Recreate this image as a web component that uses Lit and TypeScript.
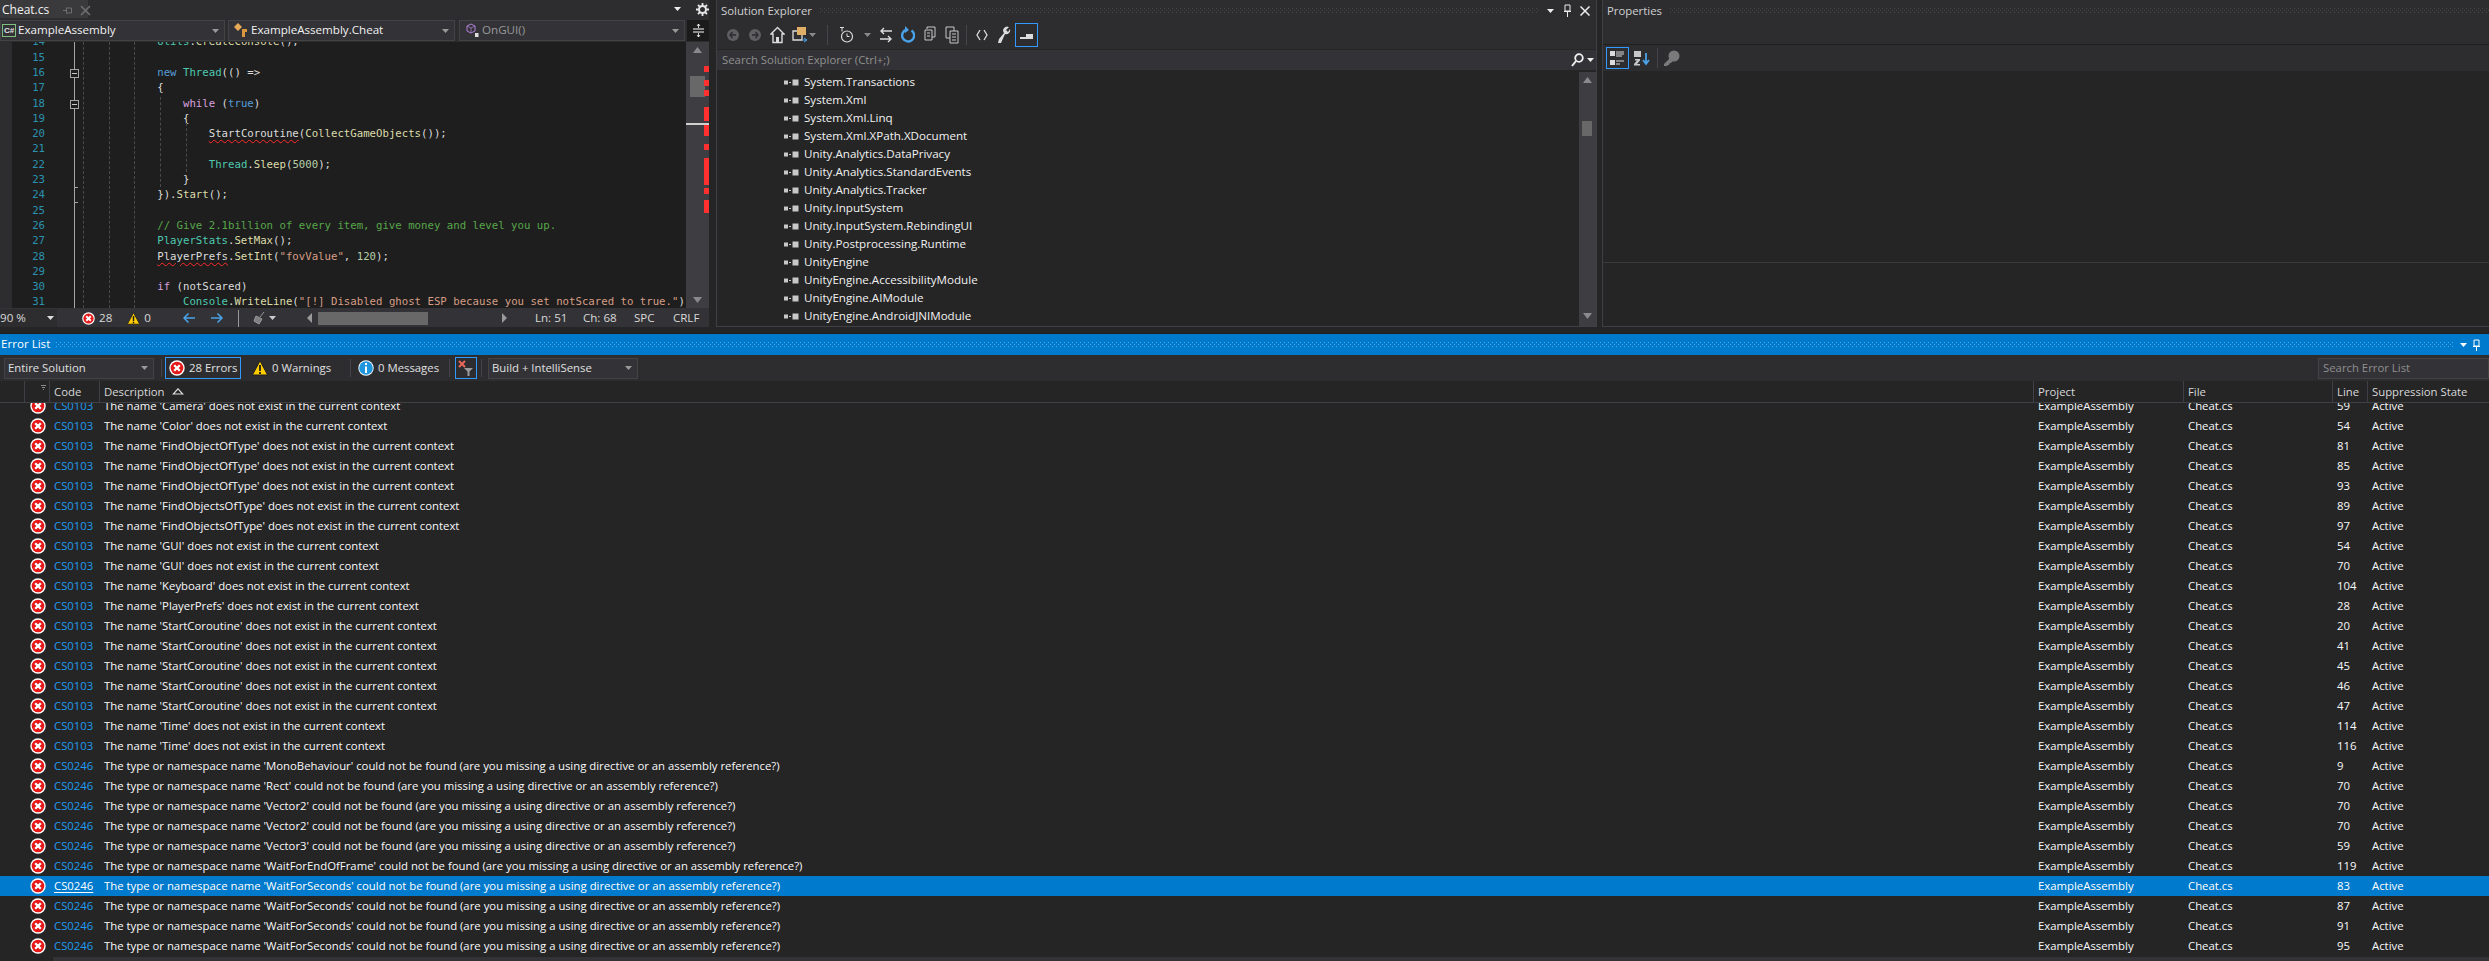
import { LitElement, html, svg, css, nothing } from "lit";
import { customElement } from "lit/decorators.js";

type Seg = [string, string];
const K = "k", T = "t", C = "c", S = "s", G = "g", N = "n", M = "m", P = "p", W = "w", V = "v";

const CODE: [number, Seg[]][] = [
  [14, [["            ", P], ["Utils", T], [".", P], ["CreateConsole", M], ["();", P]]],
  [15, []],
  [16, [["            ", P], ["new", K], [" ", P], ["Thread", T], ["(() =>", P]]],
  [17, [["            {", P]]],
  [18, [["                ", P], ["while", C], [" (", P], ["true", K], [")", P]]],
  [19, [["                {", P]]],
  [20, [["                    ", P], ["StartCoroutine", W], ["(", P], ["CollectGameObjects", M], ["());", P]]],
  [21, []],
  [22, [["                    ", P], ["Thread", T], [".", P], ["Sleep", M], ["(", P], ["5000", N], [");", P]]],
  [23, [["                }", P]]],
  [24, [["            }).", P], ["Start", M], ["();", P]]],
  [25, []],
  [26, [["            ", P], ["// Give 2.1billion of every item, give money and level you up.", G]]],
  [27, [["            ", P], ["PlayerStats", T], [".", P], ["SetMax", M], ["();", P]]],
  [28, [["            ", P], ["PlayerPrefs", W], [".", P], ["SetInt", M], ["(", P], ["\"fovValue\"", S], [", ", P], ["120", N], [");", P]]],
  [29, []],
  [30, [["            ", P], ["if", C], [" (", P], ["notScared", V], [")", P]]],
  [31, [["                ", P], ["Console", T], [".", P], ["WriteLine", M], ["(", P], ["\"[!] Disabled ghost ESP because you set notScared to true.\"", S], [")", P]]],
];

const MARKS: [number, number][] = [[66, 6], [80, 6], [90, 6], [107, 14], [124, 12], [144, 6], [158, 27], [188, 6], [200, 13]];

const REFS = ["System.Transactions", "System.Xml", "System.Xml.Linq", "System.Xml.XPath.XDocument", "Unity.Analytics.DataPrivacy", "Unity.Analytics.StandardEvents", "Unity.Analytics.Tracker", "Unity.InputSystem", "Unity.InputSystem.RebindingUI", "Unity.Postprocessing.Runtime", "UnityEngine", "UnityEngine.AccessibilityModule", "UnityEngine.AIModule", "UnityEngine.AndroidJNIModule"];

const ctx = (n: string) => `The name '${n}' does not exist in the current context`;
const typ = (n: string) => `The type or namespace name '${n}' could not be found (are you missing a using directive or an assembly reference?)`;
const ERR: [string, string, number][] = [
  ["CS0103", ctx("Camera"), 59], ["CS0103", ctx("Color"), 54],
  ["CS0103", ctx("FindObjectOfType"), 81], ["CS0103", ctx("FindObjectOfType"), 85], ["CS0103", ctx("FindObjectOfType"), 93],
  ["CS0103", ctx("FindObjectsOfType"), 89], ["CS0103", ctx("FindObjectsOfType"), 97],
  ["CS0103", ctx("GUI"), 54], ["CS0103", ctx("GUI"), 70], ["CS0103", ctx("Keyboard"), 104], ["CS0103", ctx("PlayerPrefs"), 28],
  ["CS0103", ctx("StartCoroutine"), 20], ["CS0103", ctx("StartCoroutine"), 41], ["CS0103", ctx("StartCoroutine"), 45], ["CS0103", ctx("StartCoroutine"), 46], ["CS0103", ctx("StartCoroutine"), 47],
  ["CS0103", ctx("Time"), 114], ["CS0103", ctx("Time"), 116],
  ["CS0246", typ("MonoBehaviour"), 9], ["CS0246", typ("Rect"), 70], ["CS0246", typ("Vector2"), 70], ["CS0246", typ("Vector2"), 70], ["CS0246", typ("Vector3"), 59],
  ["CS0246", typ("WaitForEndOfFrame"), 119], ["CS0246", typ("WaitForSeconds"), 83], ["CS0246", typ("WaitForSeconds"), 87], ["CS0246", typ("WaitForSeconds"), 91], ["CS0246", typ("WaitForSeconds"), 95],
];

const errIcon = (s = 16) => html`<svg class="ic" width=${s} height=${s} viewBox="0 0 16 16"><circle cx="8" cy="8" r="7.7" fill="#fff"/><circle cx="8" cy="8" r="6.3" fill="#e51919"/><path d="M5.200 5.200l5.600 5.600M10.800 5.200l-5.600 5.600" stroke="#fff" stroke-width="2.300"/></svg>`;
const warnIcon = (s = 16) => html`<svg class="ic" width=${s} height=${s} viewBox="0 0 16 16"><path d="M8 .8L15.600 15H.4z" fill="#ffcc00" stroke="#1e1e1e"/><path d="M8 5v6M8 12v2" stroke="#1e1e1e" stroke-width="1.800"/></svg>`;
const infoIcon = (s = 16) => html`<svg class="ic" width=${s} height=${s} viewBox="0 0 16 16"><circle cx="8" cy="8" r="7.700" fill="#fff"/><circle cx="8" cy="8" r="6.800" fill="#1d96de"/><path d="M8 3v2M8 6.500V13" stroke="#fff" stroke-width="2"/></svg>`;
const drop = (c = "#999") => html`<svg class="ic" width="7" height="4" viewBox="0 0 7 4"><path d="M0 0h7L3.500 4z" fill=${c}/></svg>`;
const refIcon = html`<svg class="ic" width="15" height="7" viewBox="0 0 15 7"><path d="M0 1.500h4v4H0zM5 3h2v1H5zM8.500 .5h6v6h-6z" fill="#c8c8c8"/></svg>`;
const tbIcon = (w: number, body: unknown) => html`<svg class="ic" width=${w} height="18" viewBox="0 0 ${w} 18">${body}</svg>`;

@customElement("app-root")
export class AppRoot extends LitElement {
  static styles = css`
    :host { display: block; width: 2489px; height: 961px; overflow: hidden; background: #2d2d30; color: #f1f1f1; font: 11.35px/1.4 "Open Sans", "Noto Sans", sans-serif; }
    * { box-sizing: border-box; }
    .ic { display: block; flex: none; }
    .top { display: flex; height: 334px; border-bottom: 1px solid #1f1f20; background: #252526; }
    .doc { width: 709px; flex: none; display: flex; flex-direction: column; height: 327px; background: #2d2d30; }
    .tabs { height: 18px; display: flex; align-items: center; background: #2d2d30; flex: none; }
    .tab { width: 88px; height: 18px; background: #3a3a3d; display: flex; align-items: center; padding: 2px 0 0 2px; font-size: 12px; }
    .tab .pin { margin-left: 14px; }
    .tab .x { margin-left: 8px; }
    .grow { flex: 1; }
    .tabs .menu { margin-right: 15px; }
    .nav { height: 24px; display: flex; align-items: center; gap: 3px; flex: none; padding-top: 1px; }
    .combo { height: 21px; display: flex; align-items: center; background: #333337; border: 1px solid #434346; font-size: 11.6px; position: relative; white-space: nowrap; }
    .combo .lbl { flex: 1; }
    .combo .ic:last-child { margin-right: 5px; }
    .c1 { width: 225px; padding-left: 1px; }
    .c2 { width: 227px; padding-left: 5px; }
    .c3 { width: 226px; padding-left: 6px; margin-left: 1px; color: #999; }
    .c-s { display: block; width: 14px; height: 13px; margin-right: 2px; flex: none; border: 1px solid #7fbf7f; color: #e0e0e0; font: bold 8px/11px "Liberation Sans", sans-serif; text-align: center; }
    .split { width: 22px; height: 21px; margin-left: -1px; background: #1b1b1c; display: flex; align-items: center; justify-content: center; }
    .editor { height: 266px; display: flex; flex: none; }
    .lmargin { width: 12px; background: #2d2d30; flex: none; }
    .codewrap { flex: 1; position: relative; overflow: hidden; background: #1e1e1e; }
    .lines { margin-top: -7.6px; }
    .ln { display: flex; height: 15.3px; font: 10.7px/15.3px "DejaVu Sans Mono", monospace; white-space: pre; color: #dcdcdc; }
    .num { width: 33px; text-align: right; color: #2b91af; margin-right: 35px; flex: none; }
    .k { color: #569cd6; } .t { color: #4ec9b0; } .c { color: #d8a0df; } .s { color: #d69d85; } .g { color: #57a64a; }
    .n { color: #b5cea8; } .m { color: #dcdcaa; } .p { color: #dcdcdc; } .v { color: #dcdcdc; }
    .w { color: #dcdcdc; text-decoration: underline wavy #ff2a2a 1px; text-underline-offset: 2px; }
    .guide { position: absolute; width: 0; border-left: 1px dashed #4a4a4a; }
    .fold { position: absolute; left: 62px; width: 1px; top: 0; bottom: 0; background: #a5a5a5; }
    .fbox { position: absolute; left: 62px; width: 9px; height: 9px; margin-left: -4px; background: #1e1e1e; border: 1px solid #a5a5a5; display: flex; align-items: center; justify-content: center; }
    .fbox i { display: block; width: 5px; height: 1px; background: #c8c8c8; }
    .tick { position: absolute; left: 62px; width: 4px; height: 1px; background: #a5a5a5; }
    .vbar { width: 23px; flex: none; background: #3e3e42; position: relative; }
    .varrow { position: absolute; left: 7px; }
    .vthumb { position: absolute; left: 4px; top: 34px; width: 15px; height: 21px; background: #686868; }
    .mark { position: absolute; right: 0; width: 5px; background: #ff3030; }
    .caret { position: absolute; left: 0; right: 0; top: 81px; height: 2px; background: #d0d0d0; }
    .status { height: 19px; flex: none; display: flex; align-items: center; background: #333337; font-size: 11.6px; color: #d8d8d8; white-space: nowrap; padding-top: 1px; }
    .zoomc { width: 57px; height: 18px; background: #2d2d30; display: flex; align-items: center; justify-content: space-between; padding-right: 3px; flex: none; }
    .st { display: flex; align-items: center; flex: none; }
    .sthumb { width: 110px; height: 13px; background: #686868; flex: none; }
    .sol { width: 881px; flex: none; margin-left: 7px; display: flex; flex-direction: column; height: 327px; border-left: 1px solid #3f3f46; border-right: 1px solid #3f3f46; border-bottom: 1px solid #3f3f46; background: #252526; }
    .ph { height: 20px; flex: none; display: flex; align-items: center; padding: 1px 0 0 4px; background: #2d2d30; font-size: 11.35px; color: #d0d0d0; gap: 8px; white-space: nowrap; }
    .dots { flex: 1; height: 5px; background-image: radial-gradient(circle at .5px .5px, #47474b .8px, transparent .8px), radial-gradient(circle at .5px .5px, #47474b .8px, transparent .8px); background-size: 4px 4px; background-position: 0 0, 2px 2px; }
    .sol .ph { padding-right: 6px; }
    .stb { height: 29px; flex: none; display: flex; align-items: center; background: #2d2d30; padding-left: 5px; }
    .tb { display: flex; align-items: center; justify-content: center; height: 22px; flex: none; }
    .sep { width: 1px; height: 20px; background: #45454a; flex: none; }
    .active { border: 1px solid #3399ff; }
    .ssearch { height: 20px; margin: 1px 0 2px; flex: none; display: flex; align-items: center; justify-content: space-between; background: #333337; color: #8f8f8f; padding: 0 2px 0 5px; font-size: 11.35px; }
    .tree { flex: 1; min-height: 0; display: flex; background: #252526; }
    .items { flex: 1; padding-top: 1px; }
    .ref { height: 18px; display: flex; align-items: center; padding-left: 67px; gap: 5px; font-size: 11.6px; color: #f1f1f1; }
    .tscroll { width: 17px; flex: none; background: #3e3e42; position: relative; }
    .tscroll .th { position: absolute; left: 3px; top: 49px; width: 10px; height: 15px; background: #686868; }
    .props { flex: 1; margin-left: 5px; display: flex; flex-direction: column; height: 327px; border-left: 1px solid #3f3f46; border-bottom: 1px solid #3f3f46; background: #252526; }
    .pband { height: 25px; background: #2d2d30; border-bottom: 1px solid #1f1f20; flex: none; }
    .ptb { height: 26px; background: #2d2d30; display: flex; align-items: center; padding-left: 3px; flex: none; }
    .pbody { height: 192px; border-bottom: 1px solid #3a3a3d; flex: none; }
    .errs { display: flex; flex-direction: column; height: 627px; background: #252526; }
    .eh { height: 21px; flex: none; background: #007acc; display: flex; align-items: center; padding: 0 9px 0 1px; gap: 6px; font-size: 11.6px; color: #fff; white-space: nowrap; }
    .eh .dots { background-image: radial-gradient(circle at .5px .5px, #59a8dc .8px, transparent .8px), radial-gradient(circle at .5px .5px, #59a8dc .8px, transparent .8px); }
    .etb { height: 26px; flex: none; display: flex; align-items: center; background: #2d2d30; padding-left: 4px; font-size: 11.35px; color: #e0e0e0; white-space: nowrap; }
    .etb .combo { font-size: 11.35px; }
    .e-combo { width: 150px; justify-content: space-between; padding-left: 3px; margin-right: 7px; }
    .e-btn { height: 22px; display: flex; align-items: center; gap: 4px; flex: none; }
    .esearch { width: 171px; height: 21px; flex: none; background: #333337; border: 1px solid #434346; color: #8f8f8f; padding-left: 4px; display: flex; align-items: center; }
    .ehead, .row { display: grid; grid-template-columns: 25px 25px 50px 1934px 150px 149px 35px 121px; }
    .ehead { height: 22px; flex: none; background: #252526; border-bottom: 1px solid #3f3f46; font-size: 11.35px; color: #d8d8d8; white-space: nowrap; }
    .ehead > div { border-right: 1px solid #3f3f46; padding-left: 4px; display: flex; align-items: center; gap: 7px; position: relative; }
    .ehead > div:last-child { border-right: 0; }
    .rows { flex: 1; min-height: 0; overflow: hidden; }
    .rowsin { margin-top: -7px; }
    .row { height: 20px; align-items: center; font-size: 11.35px; color: #f8f8f8; }
    .row > span { padding-left: 4px; white-space: nowrap; }
    .row .code { color: #1f9bf0; }
    .row .icell { padding-left: 5px; }
    .row.sel { background: #007acc; color: #fff; }
    .row.sel .code { color: #fff; text-decoration: underline; text-underline-offset: 2px; }
    .hscroll { height: 4px; margin-left: 53px; background: #333337; flex: none; }
  `;

  private renderEditor() {
    return html`<div class="editor">
      <div class="lmargin"></div>
      <div class="codewrap">
        <div class="lines">
          ${CODE.map(([n, segs]) => html`<div class="ln"><span class="num">${n}</span><span>${segs.map(([t, c]) => html`<span class=${c}>${t}</span>`)}</span></div>`)}
        </div>
        <div class="fold"></div>
        ${[71, 97, 122].map((x) => html`<div class="guide" style="left:${x}px;top:0;bottom:0"></div>`)}
        <div class="guide" style="left:148px;top:55px;height:90px"></div>
        <div class="guide" style="left:174px;top:81px;height:49px"></div>
        ${[27, 58].map((t) => html`<div class="fbox" style="top:${t}px"><i></i></div>`)}
        ${[145, 160].map((t) => html`<div class="tick" style="top:${t}px"></div>`)}
      </div>
      <div class="vbar">
        <svg class="ic varrow" style="top:5px" width="9" height="6" viewBox="0 0 9 6"><path d="M0 6h9L4.500 0z" fill="#8a8a8e"/></svg>
        <svg class="ic varrow" style="top:255px" width="9" height="6" viewBox="0 0 9 6"><path d="M0 0h9L4.500 6z" fill="#8a8a8e"/></svg>
        <div class="vthumb"></div>
        ${MARKS.map(([t, h]) => html`<div class="mark" style="top:${t - 42}px;height:${h}px"></div>`)}
        <div class="caret"></div>
      </div>
    </div>`;
  }

  private renderStatus() {
    return html`<div class="status">
      <div class="zoomc"><span>90 %</span>${drop("#ddd")}</div>
      <div class="st" style="margin-left:25px;gap:4px">${errIcon(13)}<span>28</span></div>
      <div class="st" style="margin-left:15px;gap:4px">${warnIcon(13)}<span>0</span></div>
      <div class="st" style="margin-left:31px">
        <svg class="ic" width="14" height="12" viewBox="0 0 14 12"><path d="M13 6H2M6.500 1.500L2 6l4.500 4.500" fill="none" stroke="#4aa3e8" stroke-width="1.500"/></svg>
      </div>
      <div class="st" style="margin-left:14px">
        <svg class="ic" width="14" height="12" viewBox="0 0 14 12"><path d="M1 6h11M7.500 1.500L12 6l-4.500 4.500" fill="none" stroke="#4aa3e8" stroke-width="1.500"/></svg>
      </div>
      <div class="sep" style="margin-left:14px;height:17px;background:#9a9a9a"></div>
      <div class="st" style="margin-left:14px;gap:3px">
        <svg class="ic" width="13" height="14" viewBox="0 0 13 14"><path d="M11 1L7 6M3 5l6 3-3 5-5-3z" fill="#7f7f7f" stroke="#9a9a9a"/></svg>
        ${drop("#ccc")}
      </div>
      <svg class="ic" style="margin-left:31px" width="5" height="10" viewBox="0 0 5 10"><path d="M5 0v10L0 5z" fill="#9a9a9a"/></svg>
      <div class="sthumb" style="margin-left:6px"></div>
      <svg class="ic" style="margin-left:74px" width="5" height="10" viewBox="0 0 5 10"><path d="M0 0v10l5-5z" fill="#9a9a9a"/></svg>
      <span style="margin-left:28px;width:48px">Ln: 51</span>
      <span style="width:51px">Ch: 68</span>
      <span style="width:39px">SPC</span>
      <span>CRLF</span>
    </div>`;
  }

  private renderDoc() {
    return html`<section class="doc">
      <div class="tabs">
        <div class="tab"><span>Cheat.cs</span>
          <svg class="ic pin" width="9" height="9" viewBox="0 0 9 9"><path d="M0 4.500h3M3.500 1.500v6M3.500 2h5v5h-5" fill="none" stroke="#6f6f72"/></svg>
          <svg class="ic x" width="11" height="11" viewBox="0 0 11 11"><path d="M1 1l9 9M10 1l-9 9" stroke="#6f6f72" stroke-width="1.600"/></svg>
        </div>
        <div class="grow"></div>
        <div class="menu">${drop("#eee")}</div>
        <svg class="ic" width="13" height="13" viewBox="0 0 13 13"><circle cx="6.500" cy="6.500" r="3.500" fill="none" stroke="#e8e8e8" stroke-width="2"/><path d="M6.500 0v2.500M6.500 10.500V13M0 6.500h2.500M10.500 6.500H13M2 2l1.700 1.700M9.300 9.300L11 11M11 2L9.300 3.700M3.700 9.300L2 11" stroke="#e8e8e8" stroke-width="1.800"/></svg>
      </div>
      <div class="nav">
        <div class="combo c1"><span class="c-s">C#</span><span class="lbl">ExampleAssembly</span>${drop()}</div>
        <div class="combo c2">
          <svg class="ic" style="margin-right:2px" width="15" height="15" viewBox="0 0 15 15"><path d="M4 0l4 4-4 4-4-4z" fill="#e8a958"/><path d="M8 6h5v3h-2v5H8z" fill="#d8963f"/></svg>
          <span class="lbl">ExampleAssembly.Cheat</span>${drop()}
        </div>
        <div class="combo c3">
          <svg class="ic" style="margin-right:3px" width="13" height="15" viewBox="0 0 13 15"><path d="M5 1l4 2v5l-4 2-4-2V3z" fill="none" stroke="#b180d7"/><path d="M1 3l4 2 4-2M5 5v5" fill="none" stroke="#b180d7" stroke-width=".7"/><path d="M9 10h3.500v4H9z" fill="#ddd"/></svg>
          <span class="lbl">OnGUI()</span>${drop()}
        </div>
        <div class="split">
          <svg class="ic" width="11" height="13" viewBox="0 0 11 13"><path d="M0 5h11M0 8h11" stroke="#fff"/><path d="M5.500 0v4M5.500 9v4M4 2l1.500-2L7 2M4 11l1.500 2L7 11" fill="none" stroke="#fff" stroke-width=".8"/></svg>
        </div>
      </div>
      ${this.renderEditor()}
      ${this.renderStatus()}
    </section>`;
  }

  private renderSol() {
    const d = "#5f5f62";
    return html`<section class="sol">
      <div class="ph"><span>Solution Explorer</span><div class="dots"></div>
        ${drop("#eee")}
        <svg class="ic" style="margin-left:2px" width="7" height="13" viewBox="0 0 7 13"><path d="M1 1h5v6H1zM0 7.500h7M3.500 8v5" fill="none" stroke="#eee"/></svg>
        <svg class="ic" style="margin-left:1px" width="10" height="10" viewBox="0 0 10 10"><path d="M.5.5l9 9M9.500.5l-9 9" stroke="#eee" stroke-width="1.500"/></svg>
      </div>
      <div class="stb">
        <div class="tb" style="width:22px">${tbIcon(14, svg`<circle cx="7" cy="9" r="6" fill=${d}/><path d="M10 9H4M6.500 6L4 9l2.500 3" fill="none" stroke="#2d2d30" stroke-width="1.400"/>`)}</div>
        <div class="tb" style="width:22px">${tbIcon(14, svg`<circle cx="7" cy="9" r="6" fill=${d}/><path d="M4 9h6M7.500 6L10 9l-2.500 3" fill="none" stroke="#2d2d30" stroke-width="1.400"/>`)}</div>
        <div class="tb" style="width:22px">${tbIcon(15, svg`<path d="M7.500 1.500L1 8h2v8.500h9V8h2z" fill="none" stroke="#dcdcdc" stroke-width="1.400"/><path d="M6 11h3v5.500H6z" fill="#dcdcdc"/>`)}</div>
        <div class="tb" style="width:18px;margin-left:3px">${tbIcon(16, svg`<path d="M1 5h9v9H1z" fill="none" stroke="#dcdcdc" stroke-width="1.300"/><path d="M5 1h9v8H5z" fill="#e0ae65"/><path d="M10 14h5M12 12l3 2-3 2" fill="none" stroke="#4aa3e8"/>`)}</div>
        ${drop("#8a8a8a")}
        <div class="sep" style="margin-left:11px"></div>
        <div class="tb" style="width:36px">${tbIcon(15, svg`<circle cx="8" cy="10.500" r="5.500" fill="none" stroke="#dcdcdc" stroke-width="1.200"/><path d="M8 7.500v3h2.500M1 1.500h4M3 1.500v4" fill="none" stroke="#dcdcdc"/>`)}</div>
        ${drop("#8a8a8a")}
        <div class="tb" style="width:25px;margin-left:2px">${tbIcon(14, svg`<path d="M13 5H2M5 2L2 5l3 3M1 13h11M9 10l3 3-3 3" fill="none" stroke="#dcdcdc" stroke-width="1.400"/>`)}</div>
        <div class="tb" style="width:19px">${tbIcon(14, svg`<path d="M10.500 4.500a6 6 0 1 1-5-.8" fill="none" stroke="#4aa3e8" stroke-width="2.400"/><path d="M4 0l4 4-4 3z" fill="#4aa3e8"/>`)}</div>
        <div class="tb" style="width:25px">${tbIcon(12, svg`<path d="M3 3V1h8v10h-3M1 4h7v10H1z" fill="none" stroke="#c8c8c8"/><path d="M3 7h3M3 10h3" stroke="#c8c8c8"/>`)}</div>
        <div class="tb" style="width:19px">${tbIcon(14, svg`<path d="M1 1h8v11H1z" fill="none" stroke="#c8c8c8"/><path d="M5 5h8v12H5z" fill="#2d2d30" stroke="#c8c8c8"/><path d="M7 8h4M7 11h4M7 14h4" stroke="#c8c8c8"/>`)}</div>
        <div class="sep" style="margin-left:5px"></div>
        <div class="tb" style="width:30px">${tbIcon(12, svg`<path d="M4 4L1 9l3 5M8 4l3 5-3 5" fill="none" stroke="#dcdcdc" stroke-width="1.300"/>`)}</div>
        <div class="tb" style="width:14px">${tbIcon(14, svg`<path d="M13 3a4 4 0 0 1-5 5L4 17H1l1-4 5-6a4 4 0 0 1 5-6L9 4l2 2z" fill="#dcdcdc"/>`)}</div>
        <div class="tb active" style="width:23px;height:24px;margin-left:4px">${tbIcon(15, svg`<path d="M1 11h13v2H1zM7 8h7v3H7z" fill="#dcdcdc"/>`)}</div>
      </div>
      <div class="ssearch"><span>Search Solution Explorer (Ctrl+;)</span>
        <span style="display:flex;align-items:center;gap:3px">
          <svg class="ic" width="13" height="14" viewBox="0 0 13 14"><circle cx="8" cy="5" r="3.800" fill="none" stroke="#f1f1f1" stroke-width="1.800"/><path d="M5 8l-4 5" stroke="#f1f1f1" stroke-width="2"/></svg>${drop("#eee")}
        </span>
      </div>
      <div class="tree">
        <div class="items">${REFS.map((r) => html`<div class="ref">${refIcon}<span>${r}</span></div>`)}</div>
        <div class="tscroll">
          <svg class="ic varrow" style="left:4px;top:5px" width="9" height="6" viewBox="0 0 9 6"><path d="M0 6h9L4.500 0z" fill="#8a8a8e"/></svg>
          <svg class="ic varrow" style="left:4px;top:241px" width="9" height="6" viewBox="0 0 9 6"><path d="M0 0h9L4.500 6z" fill="#8a8a8e"/></svg>
          <div class="th"></div>
        </div>
      </div>
    </section>`;
  }

  private renderProps() {
    return html`<section class="props">
      <div class="ph"><span>Properties</span><div class="dots"></div></div>
      <div class="pband"></div>
      <div class="ptb">
        <div class="tb active" style="width:23px">
          <svg class="ic" width="15" height="14" viewBox="0 0 15 14"><path d="M0 0h5v5H0zM0 9h5v5H0z" fill="#dcdcdc"/><path d="M6 1h8M6 3h8M6 5h6M6 10h8M6 13h4" stroke="#dcdcdc"/></svg>
        </div>
        <div class="tb" style="width:22px;margin-left:2px">
          <svg class="ic" width="16" height="16" viewBox="0 0 16 16"><path d="M0 1h7v6H0zM1 9h5v1.500L3 14h3v1.500H0V14l3-3.500H1z" fill="#c8c8c8"/><path d="M12 3v11M9 10l3 4 3-4" fill="none" stroke="#4aa3e8" stroke-width="1.800"/></svg>
        </div>
        <div class="sep" style="margin-left:4px"></div>
        <div class="tb" style="width:24px;margin-left:1px">
          <svg class="ic" width="17" height="17" viewBox="0 0 17 17"><circle cx="11" cy="6" r="5.500" fill="#7a7a7a"/><path d="M7 8L1 14v2h3l1-1h1l1-2h1l2-2z" fill="#7a7a7a"/></svg>
        </div>
      </div>
      <div class="pbody"></div>
    </section>`;
  }

  private renderErrors() {
    return html`<section class="errs">
      <div class="eh"><span>Error List</span><div class="dots"></div>
        ${drop("#fff")}
        <svg class="ic" width="7" height="12" viewBox="0 0 7 12"><path d="M1 1h5v6H1zM0 7.500h7M3.500 8v4" fill="none" stroke="#fff"/></svg>
      </div>
      <div class="etb">
        <div class="combo e-combo"><span>Entire Solution</span>${drop()}</div>
        <div class="sep" style="height:18px"></div>
        <div class="e-btn active" style="width:76px;margin-left:3px;padding-left:3px">${errIcon(16)}<span>28 Errors</span></div>
        <div class="e-btn" style="width:98px;margin-left:11px">${warnIcon(16)}<span>0 Warnings</span></div>
        <div class="sep" style="height:18px"></div>
        <div class="e-btn" style="width:91px;margin-left:7px">${infoIcon(16)}<span>0 Messages</span></div>
        <div class="sep" style="height:18px"></div>
        <div class="e-btn active" style="width:22px;margin-left:5px;justify-content:center">
          <svg class="ic" width="16" height="16" viewBox="0 0 16 16"><path d="M1 1l6 6M7 1L1 7" stroke="#e8685a" stroke-width="2"/><path d="M6 8h9l-3.500 3.500V16h-2v-4.500z" fill="#9a9a9a"/></svg>
        </div>
        <div class="sep" style="height:18px;margin-left:4px"></div>
        <div class="combo e-combo" style="margin-left:6px;width:150px;margin-right:0"><span>Build + IntelliSense</span>${drop()}</div>
        <div class="grow"></div>
        <div class="esearch"><span>Search Error List</span></div>
      </div>
      <div class="ehead">
        <div></div>
        <div><svg class="ic" style="position:absolute;right:3px;top:4px" width="5" height="5" viewBox="0 0 5 5"><path d="M0 .5h5M1 2.500h3M2 4.500h1" stroke="#8a8a8a"/></svg></div>
        <div>Code</div>
        <div>Description
          <svg class="ic" width="12" height="7" viewBox="0 0 12 7"><path d="M6 .8L10.700 6H1.300z" fill="none" stroke="#dcdcdc" stroke-width="1.200"/></svg>
        </div>
        <div>Project</div><div>File</div><div>Line</div><div>Suppression State</div>
      </div>
      <div class="rows"><div class="rowsin">
        ${ERR.map(([code, desc, line], i) => html`<div class="row ${i === 24 ? "sel" : ""}">
          <span></span><span class="icell">${errIcon(16)}</span>
          <span class="code">${code}</span><span>${desc}</span>
          <span>ExampleAssembly</span><span>Cheat.cs</span><span>${line}</span><span>Active</span>
        </div>`)}
      </div></div>
      <div class="hscroll"></div>
    </section>`;
  }

  render() {
    return html`
      <div class="top">${this.renderDoc()}${this.renderSol()}${this.renderProps()}</div>
      ${this.renderErrors()}
      ${nothing}
    `;
  }
}
